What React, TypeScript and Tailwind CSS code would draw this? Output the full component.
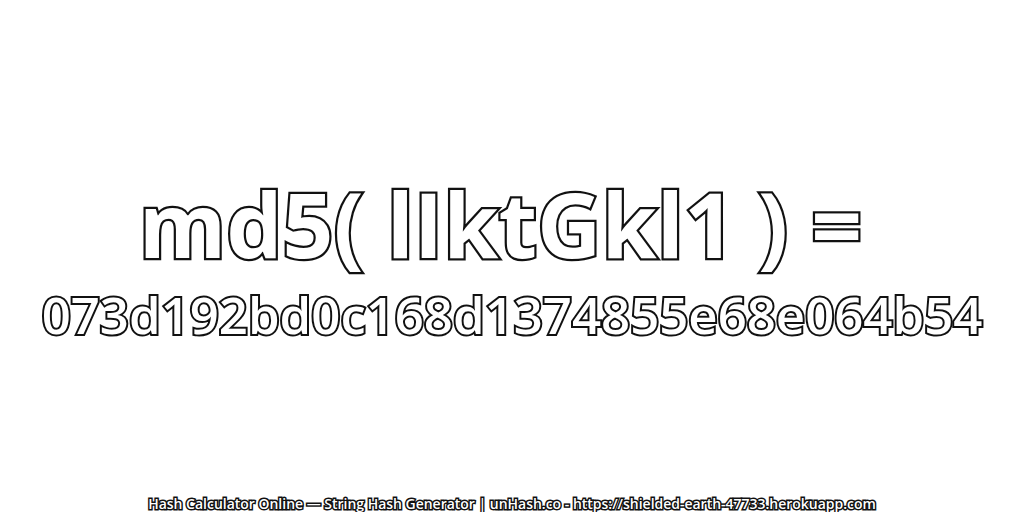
import React from "react";

const outline = "text-white [font-family:'Open_Sans',sans-serif] [paint-order:stroke_fill] whitespace-nowrap";

const App: React.FC = () => {
  return (
    <div className="relative flex h-[512px] w-[1024px] flex-col items-center overflow-hidden bg-white">
      <h1 className={`${outline} mt-[178px] text-[89px] leading-[92px] font-bold [-webkit-text-stroke:4.5px_#111]`}>
        md5( lIktGkl1 ) =&nbsp;
      </h1>
      <p className={`${outline} mt-[17px] text-[50.9px] leading-[56px] font-semibold [-webkit-text-stroke:4px_#111]`}>
        073d192bd0c168d1374855e68e064b54
      </p>
      <p className={`${outline} mt-auto mb-[-1px] text-[13.98px] leading-[18px] font-semibold [-webkit-text-stroke:3px_#111]`}>
        Hash Calculator Online — String Hash Generator | unHash.co - https://shielded-earth-47733.herokuapp.com
      </p>
    </div>
  );
};

export default App;
